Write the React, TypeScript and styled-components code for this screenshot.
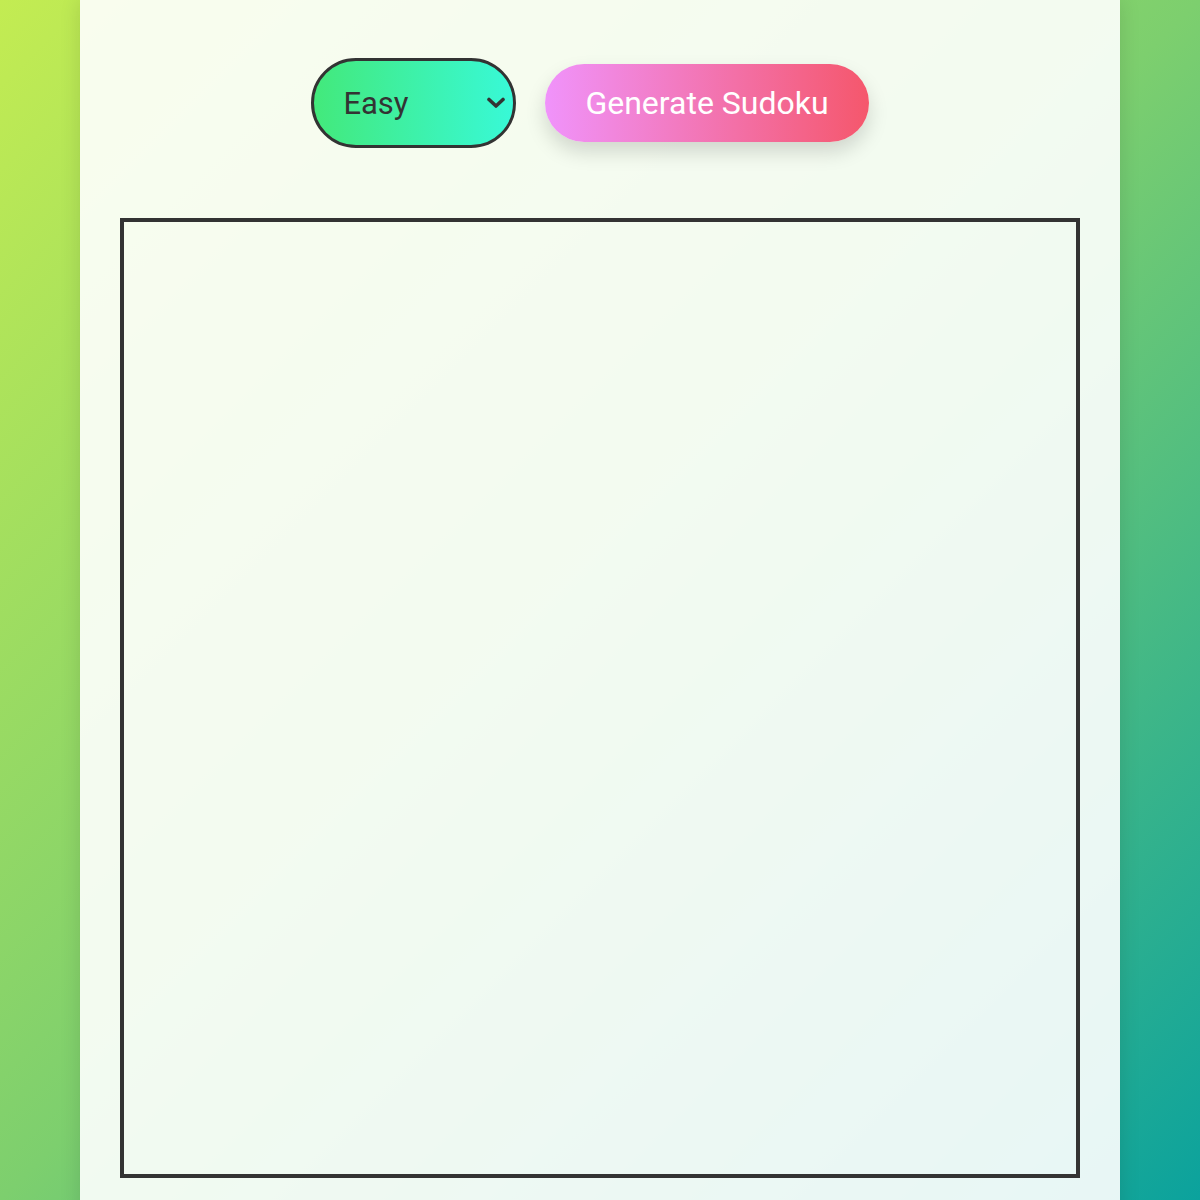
import React, { useState } from 'react'
import styled, { createGlobalStyle } from 'styled-components'

const GlobalStyle = createGlobalStyle`
  html, body {
    margin: 0;
    padding: 0;
    overflow: hidden;
  }
  body {
    min-height: 1200px;
    font-family: Roboto, "Liberation Sans", sans-serif;
    background: linear-gradient(135deg, #c3ec52 0%, #7dcf6e 50%, #0ba29d 100%);
    background-attachment: fixed;
  }
`

const Panel = styled.main`
  width: 1040px;
  min-height: 1200px;
  margin: 0 auto;
  padding: 58px 40px 40px;
  box-sizing: border-box;
  background: rgba(255, 255, 255, 0.9);
  box-shadow: 0 0 20px rgba(0, 0, 0, 0.12);
`

const Controls = styled.div`
  display: flex;
  justify-content: center;
  align-items: center;
  gap: 29px;
  padding-right: 20px;
  margin-bottom: 70px;
`

const SelectWrap = styled.div`
  position: relative;
  display: inline-flex;
`

const LevelSelect = styled.select`
  appearance: none;
  -webkit-appearance: none;
  width: 205px;
  height: 90px;
  padding: 0 50px 0 29px;
  border: 3px solid #333;
  border-radius: 45px;
  background: linear-gradient(to right, #43e97b, #38f9d7);
  color: #333;
  font-family: Roboto, "Liberation Sans", sans-serif;
  font-size: 31px;
  outline: none;
  cursor: pointer;
`

const Chevron = styled.svg`
  position: absolute;
  right: 10px;
  top: 50%;
  width: 20px;
  height: 12px;
  margin-top: -6px;
  pointer-events: none;
`

const GenerateButton = styled.button`
  height: 78px;
  padding: 0 40px;
  border: none;
  border-radius: 39px;
  background: linear-gradient(to right, #f093fb, #f5576c);
  color: #fff;
  font-family: Roboto, "Liberation Sans", sans-serif;
  font-size: 32px;
  box-shadow: 0 10px 20px rgba(0, 0, 0, 0.15);
  cursor: pointer;
`

const Board = styled.div`
  display: grid;
  grid-template-columns: repeat(9, 1fr);
  width: 960px;
  height: 960px;
  box-sizing: border-box;
  border: 4px solid #333;
`

export default function App() {
  const [level, setLevel] = useState('easy')

  return (
    <>
      <GlobalStyle />
      <Panel>
        <Controls>
          <SelectWrap>
            <LevelSelect value={level} onChange={(e) => setLevel(e.target.value)}>
              <option value="easy">Easy</option>
              <option value="medium">Medium</option>
              <option value="hard">Hard</option>
            </LevelSelect>
            <Chevron viewBox="0 0 20 12" fill="none">
              <path d="M3 2.5 L10 9 L17 2.5" stroke="#333" strokeWidth="3.6" strokeLinecap="round" strokeLinejoin="round" />
            </Chevron>
          </SelectWrap>
          <GenerateButton>Generate Sudoku</GenerateButton>
        </Controls>
        <Board />
      </Panel>
    </>
  )
}
